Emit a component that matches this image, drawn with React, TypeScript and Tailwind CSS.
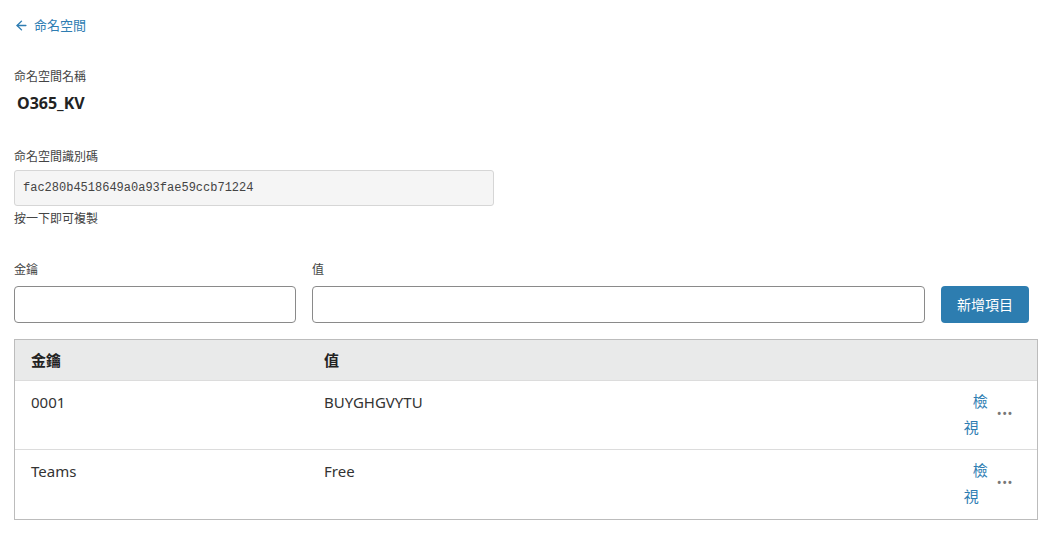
import { ArrowLeft } from "lucide-react";

type Entry = {
  key: string;
  value: string;
};

const entries: Entry[] = [
  { key: "0001", value: "BUYGHGVYTU" },
  { key: "Teams", value: "Free" },
];

const cjk = "font-['Segoe_UI','Noto_Sans','Noto_Sans_CJK_TC',sans-serif]";

export default function App() {
  return (
    <div className={`${cjk} min-h-[533px] w-[1049px] bg-white pl-[14px] pr-[11px] text-[#333]`}>
      {/* 返回 */}
      <div className="pt-[16px]">
        <a className="flex items-center gap-[5px] text-[13px] leading-[18px] text-[#2e7db2]">
          <ArrowLeft className="size-[15px]" strokeWidth={2.25} />
          <span>命名空間</span>
        </a>
      </div>

      {/* 名稱 */}
      <div className="mt-[34px] text-[12px] leading-[18px] text-[#444]">命名空間名稱</div>
      <div className="mt-[6px] pl-[3px] text-[16px] leading-[22px] font-bold text-[#222]">O365_KV</div>

      {/* 識別碼 */}
      <div className="mt-[34px] text-[12px] leading-[18px] text-[#444]">命名空間識別碼</div>
      <div className="mt-[4px] flex h-[36px] w-[480px] items-center rounded-[3px] border border-[#d6d6d6] bg-[#f5f5f5] pl-[8px] font-['Liberation_Mono',monospace] text-[12px] text-[#444]">
        fac280b4518649a0a93fae59ccb71224
      </div>
      <div className="mt-[4px] text-[12px] leading-[18px] text-[#444]">按一下即可複製</div>

      {/* 新增 */}
      <div className="mt-[33px] flex w-[1015px] items-end gap-[16px]">
        <div className="flex w-[282px] flex-col">
          <label className="text-[12px] leading-[18px] text-[#444]">金鑰</label>
          <input className="mt-[7px] h-[37px] rounded-[4px] border border-[#8a8a8a] px-[8px] outline-none" />
        </div>
        <div className="flex flex-1 flex-col">
          <label className="text-[12px] leading-[18px] text-[#444]">值</label>
          <input className="mt-[7px] h-[37px] rounded-[4px] border border-[#8a8a8a] px-[8px] outline-none" />
        </div>
        <button className="h-[37px] w-[88px] rounded-[4px] bg-[#2d7db0] text-[14px] text-white">
          新增項目
        </button>
      </div>

      {/* 表格 */}
      <div className="mt-[16px] w-[1024px] border border-[#bcbcbc]">
        <div className="flex h-[41px] items-center border-b border-[#dcdcdc] bg-[#e9eaea] text-[15px] font-semibold text-[#222]">
          <div className="w-[309px] pl-[16px]">金鑰</div>
          <div className="flex-1">值</div>
        </div>
        {entries.map((entry, index) => (
          <div
            key={entry.key}
            className={`flex h-[69px] items-start text-[15px] text-[#333] ${index < entries.length - 1 ? "border-b border-[#dcdcdc]" : ""}`}
          >
            <div className="w-[309px] pt-[10px] pl-[16px] leading-[22px]">{entry.key}</div>
            <div className="flex-1 pt-[10px] leading-[22px]">{entry.value}</div>
            <div className="flex items-center pt-[7px] pr-[24px]">
              <a className="flex w-[24px] flex-col text-[15px] leading-[26px] text-[#2e7db2]">
                <span className="pl-[9px]">檢</span>
                <span>視</span>
              </a>
              <span className="ml-[9px] text-[13px] tracking-[0.5px] text-[#777]">•••</span>
            </div>
          </div>
        ))}
      </div>
    </div>
  );
}
